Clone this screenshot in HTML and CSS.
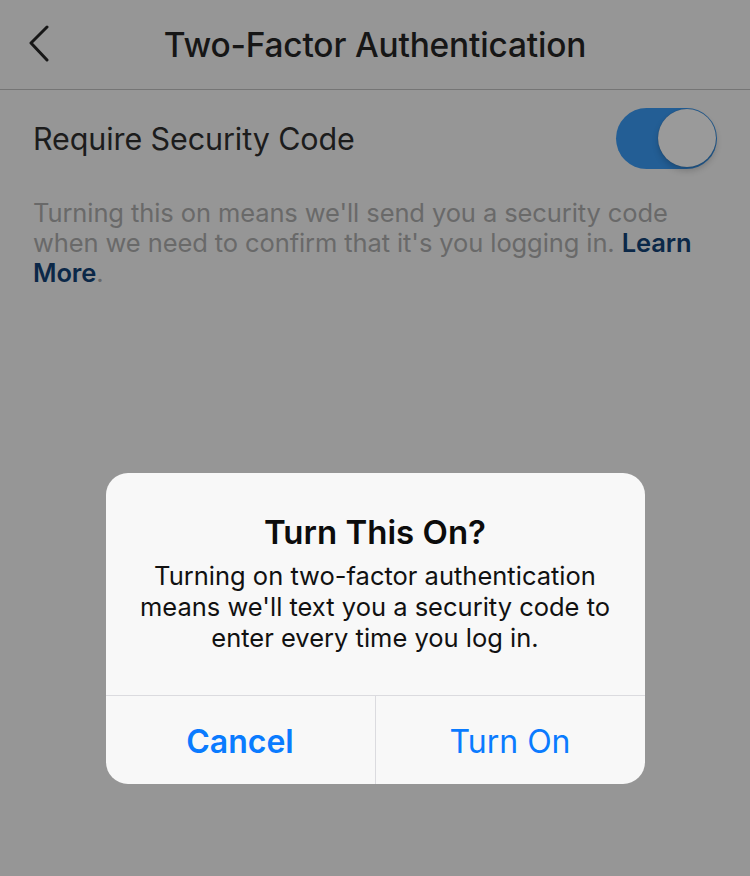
FILE: index.html
```html
<!DOCTYPE html>
<html>
<head>
<meta charset="utf-8">
<link rel="stylesheet" href="styles.css">
</head>
<body>
<div class="screen">
  <header class="nav">
    <div class="back">
      <svg width="24" height="40" viewBox="0 0 24 40"><path d="M18 5 L2 21 L18 38" fill="none" stroke="#171717" stroke-width="3" stroke-linecap="round" stroke-linejoin="round"/></svg>
    </div>
    <h1 class="title">Two-Factor Authentication</h1>
  </header>
  <section class="content">
    <div class="row">
      <span class="label">Require Security Code</span>
      <div class="toggle"><div class="knob"></div></div>
    </div>
    <p class="desc">Turning this on means we'll send you a security code when we need to confirm that it's you logging in. <b class="link">Learn More</b>.</p>
  </section>
  <div class="overlay">
    <div class="alert">
      <div class="alert-body">
        <h2 class="alert-title">Turn This On?</h2>
        <p class="alert-msg">Turning on two-factor authentication means we'll text you a security code to enter every time you log in.</p>
      </div>
      <div class="alert-actions">
        <div class="btn btn-cancel">Cancel</div>
        <div class="btn btn-on">Turn On</div>
      </div>
    </div>
  </div>
</div>
</body>
</html>
```
FILE: styles.css
```css
* { box-sizing: border-box; }
html, body { margin: 0; padding: 0; }
body {
  width: 750px;
  height: 876px;
  overflow: hidden;
  background: #969696;
  font-family: Inter, "Noto Sans", sans-serif;
}
.screen {
  position: relative;
  width: 750px;
  height: 876px;
  background: #969696;
}
.nav {
  position: relative;
  height: 90px;
  border-bottom: 1px solid #757575;
  display: flex;
  align-items: center;
  justify-content: center;
}
.back {
  position: absolute;
  left: 29px;
  top: 22px;
}
.title {
  margin: 0;
  margin-top: 0;
  font-size: 33.5px;
  font-weight: 500;
  color: #161616;
  letter-spacing: -0.2px;
}
.content {
  padding: 0 33px;
}
.row {
  display: flex;
  align-items: center;
  justify-content: space-between;
  height: 94px;
  padding-top: 2px;
}
.label {
  font-size: 30.5px;
  color: #1c1c1c;
  letter-spacing: -0.1px;
}
.toggle {
  width: 101px;
  height: 61px;
  border-radius: 31px;
  background: #235e95;
  position: relative;
  display: flex;
  align-items: center;
  justify-content: flex-end;
  padding-right: 1px;
}
.knob {
  width: 58px;
  height: 58px;
  border-radius: 50%;
  background: #9a9a9a;
  box-shadow: 0 4px 6px rgba(0,0,0,0.18), 0 0 1px rgba(0,0,0,0.3);
}
.desc {
  margin: 0;
  margin-top: 14px;
  font-size: 25.5px;
  line-height: 30px;
  color: #696969;
  letter-spacing: -0.1px;
}
.link {
  color: #0b2848;
  font-weight: 600;
}
.overlay {
  position: absolute;
  left: 0;
  top: 0;
  width: 750px;
  height: 876px;
  display: flex;
  justify-content: center;
  padding-top: 473px;
}
.alert {
  width: 539px;
  height: 311px;
  background: #f8f8f8;
  border-radius: 22px;
  display: flex;
  flex-direction: column;
  overflow: hidden;
}
.alert-body {
  height: 223px;
  border-bottom: 1px solid #dbdbdf;
  text-align: center;
  padding: 39px 20px 0;
}
.alert-title {
  margin: 0;
  font-size: 33px;
  font-weight: 600;
  color: #0c0c0c;
  line-height: 40px;
}
.alert-msg {
  margin: 8px 0 0;
  font-size: 25.5px;
  line-height: 31px;
  color: #111;
}
.alert-actions {
  flex: 1;
  display: flex;
}
.btn {
  flex: 1;
  display: flex;
  align-items: center;
  justify-content: center;
  font-size: 32px;
  color: #0a7bff;
  padding-top: 3px;
}
.btn-cancel {
  font-weight: 600;
  border-right: 1px solid #dbdbdf;
}
.btn-on {
  font-weight: 400;
}
```
